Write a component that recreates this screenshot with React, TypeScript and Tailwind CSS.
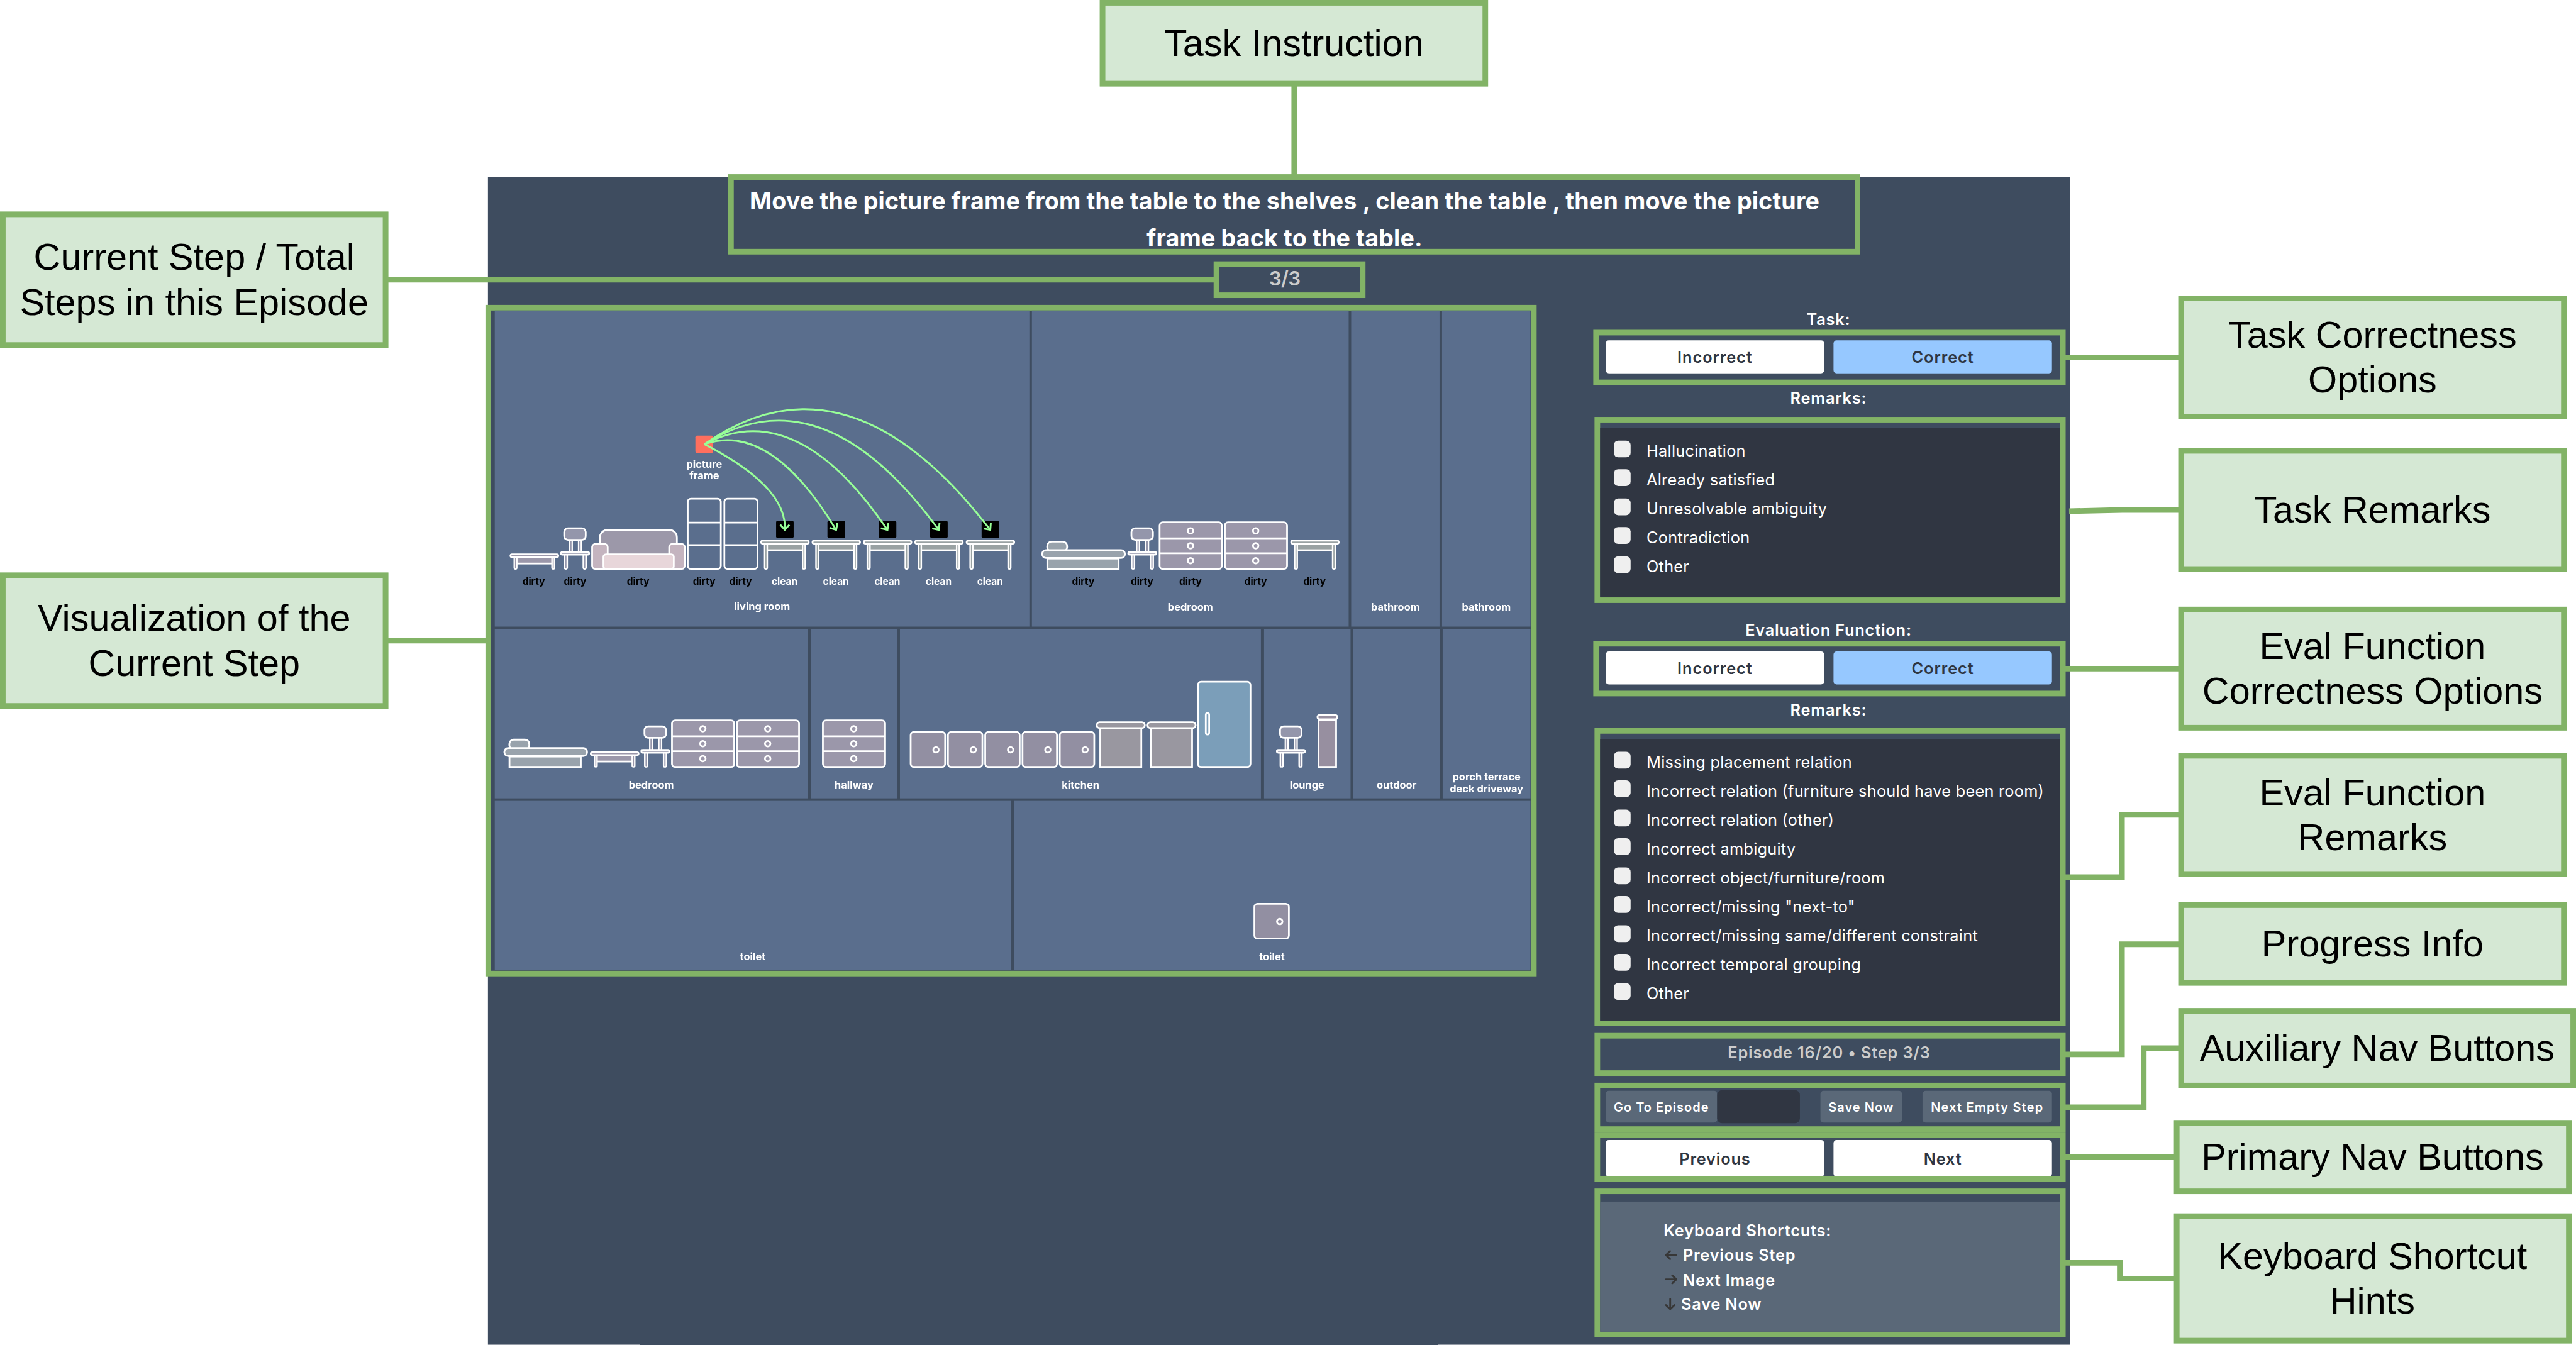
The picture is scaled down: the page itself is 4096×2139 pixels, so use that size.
import React from "react";

type Pt = { x: number; f: number };
const ST = { stroke: "#fff", strokeWidth: 2.8 };

function Chair({ x, f }: Pt) {
  return (
    <g {...ST} fill="#9496ab">
      <rect x={x - 9} y={f - 49} width={4.4} height={22} strokeWidth={2.2} />
      <rect x={x + 5.6} y={f - 49} width={4.4} height={22} strokeWidth={2.2} />
      <rect x={x - 17} y={f - 26} width={4.4} height={24.6} rx={2.2} strokeWidth={2.4} />
      <rect x={x + 13.2} y={f - 26} width={4.4} height={24.6} rx={2.2} strokeWidth={2.4} />
      <rect x={x - 17.5} y={f - 66.6} width={34.6} height={18.6} rx={6} />
      <rect x={x - 22.6} y={f - 28.6} width={45.2} height={4.4} rx={2.2} />
    </g>
  );
}

function CoffeeTable({ x, f }: Pt) {
  return (
    <g {...ST} fill="#9b97aa">
      <rect x={x - 29} y={f - 20} width={58} height={10} />
      <rect x={x - 32.3} y={f - 20} width={4} height={18.6} rx={2} strokeWidth={2.4} />
      <rect x={x + 28.3} y={f - 20} width={4} height={18.6} rx={2} strokeWidth={2.4} />
      <rect x={x - 38.4} y={f - 24.8} width={76.8} height={4.4} rx={2.2} />
    </g>
  );
}

function Table({ x, f }: Pt) {
  return (
    <g {...ST} fill="#99a2a3">
      <rect x={x - 29} y={f - 41} width={58} height={9.6} />
      <rect x={x - 32.6} y={f - 41} width={4.2} height={39.6} rx={2} strokeWidth={2.4} />
      <rect x={x + 28.4} y={f - 41} width={4.2} height={39.6} rx={2} strokeWidth={2.4} />
      <rect x={x - 38.2} y={f - 46.6} width={76.4} height={4.8} rx={2.4} />
    </g>
  );
}

function Sofa({ x, f }: Pt) {
  return (
    <g {...ST}>
      <path
        d={`M${x - 61.8} ${f - 12}V${f - 52}a12 12 0 0 1 12 -12H${x + 49.8}a12 12 0 0 1 12 12V${f - 12}Z`}
        fill="#9c98a9"
      />
      <rect x={x - 74.4} y={f - 41.3} width={25} height={39.9} rx={5} fill="#c4b4bf" />
      <rect x={x + 49.4} y={f - 41.3} width={25} height={39.9} rx={5} fill="#c4b4bf" />
      <rect x={x - 56.2} y={f - 24.8} width={113} height={23.4} rx={4} fill="#e8d6da" />
    </g>
  );
}

function Shelf({ x, f }: Pt) {
  return (
    <g {...ST} fill="none">
      <rect x={x - 26.6} y={f - 114.2} width={53.2} height={112.8} rx={5} />
      <path d={`M${x - 26.6} ${f - 75.7}h53.2M${x - 26.6} ${f - 39.6}h53.2`} />
    </g>
  );
}

function Bed({ x, f }: Pt) {
  return (
    <g {...ST} fill="#99a3ac">
      <rect x={x - 58.2} y={f - 18} width={114.6} height={16.6} />
      <rect x={x - 58.4} y={f - 45.2} width={32} height={16} rx={7} />
      <rect x={x - 66.4} y={f - 31.6} width={132.8} height={12.8} rx={6} />
    </g>
  );
}

function Dresser({ x, f }: Pt) {
  return (
    <g {...ST} fill="#9b97aa">
      <rect x={x - 50} y={f - 76.2} width={100} height={74.8} rx={5} />
      <path d={`M${x - 50} ${f - 50.6}h100M${x - 50} ${f - 26.6}h100`} />
      {[62.6, 38.6, 14.6].map((d) => (
        <circle key={d} cx={x - 0.4} cy={f - d} r={4.4} />
      ))}
    </g>
  );
}

function Cabinet({ x, f }: Pt) {
  return (
    <g {...ST} fill="#928fa2">
      <rect x={x - 27.7} y={f - 57.4} width={55.4} height={56} rx={5} />
      <circle cx={x + 13} cy={f - 28.8} r={4.4} />
    </g>
  );
}

function Counter({ x, f }: Pt) {
  return (
    <g {...ST} fill="#9997a0">
      <rect x={x - 33.2} y={f - 64} width={66} height={62.6} />
      <rect x={x - 38.8} y={f - 73} width={77.2} height={9.2} rx={4.6} />
    </g>
  );
}

function Stand({ x, f }: Pt) {
  return (
    <g {...ST} fill="#978fa0">
      <rect x={x - 14.2} y={f - 77} width={28.2} height={75.6} />
      <rect x={x - 16} y={f - 84.8} width={32} height={7} rx={3.5} />
    </g>
  );
}

function Fridge({ x, f }: Pt) {
  return (
    <g {...ST} fill="#7b9eb9">
      <rect x={x - 42.2} y={f - 138.2} width={84.4} height={136.8} rx={5} />
      <rect x={x - 29.6} y={f - 87.8} width={5.4} height={34.4} rx={2.7} />
    </g>
  );
}

// Origin shared by every movement arrow: the centre of the picture frame.
const FX = 1131.8;
const FY = 713.8;

function Arrow({ x }: { x: number }) {
  const y = 851.5;
  const dx = x - FX;
  const dy = y - FY;
  const cx = dx > dy ? (FX + x) / 2 : (FX + x) / 2 + dy / 2;
  const cy = dx > dy ? (FY + y) / 2 - dx / 2 : (FY + y) / 2;
  const a = dx > dy ? Math.atan2(y - cy, x - cx) : Math.PI / 2;
  const arm = (s: number) =>
    `${x - 11 * Math.cos(a + s * 0.73)} ${y - 11 * Math.sin(a + s * 0.73)}`;
  return (
    <g fill="none" stroke="#98ff98" strokeWidth={2.9}>
      <path d={`M${FX} ${FY}Q${cx} ${cy} ${x} ${y}`} />
      <path d={`M${arm(1)}L${x} ${y}L${arm(-1)}`} />
    </g>
  );
}

// Floor lines of the first and second row of rooms.
const F1 = 915.6;
const F2 = 1233.8;
const TABLES = [1261.2, 1343.7, 1426.2, 1508.7, 1591.4];

function Scene() {
  return (
    <svg
      className="absolute left-0 top-0 h-[1061px] w-[1671px] font-['Inter',sans-serif] text-[16.6px] font-bold"
      viewBox="789 499 1671 1061"
      textAnchor="middle"
    >
      <CoffeeTable x={858.6} f={F1} />
      <Chair x={924} f={F1} />
      <Sofa x={1025.8} f={F1} />
      <Shelf x={1131.6} f={F1} />
      <Shelf x={1190.5} f={F1} />
      {TABLES.map((x) => (
        <g key={x}>
          <Table x={x} f={F1} />
          <rect x={x - 14.2} y={836.7} width={28.2} height={28} rx={2.5} />
        </g>
      ))}
      <rect x={1117.3} y={700} width={28.5} height={28} rx={2.5} fill="#ff6f5e" />
      {TABLES.map((x) => (
        <Arrow key={x} x={x - 0.2} />
      ))}
      <Bed x={1741} f={F1} />
      <Chair x={1835.4} f={F1} />
      <Dresser x={1913.2} f={F1} />
      <Dresser x={2018} f={F1} />
      <Table x={2112.8} f={F1} />

      <Bed x={876.8} f={F2} />
      <CoffeeTable x={987.6} f={F2} />
      <Chair x={1053} f={F2} />
      <Dresser x={1129.7} f={F2} />
      <Dresser x={1233.9} f={F2} />
      <Dresser x={1372.2} f={F2} />
      {[1490.9, 1550.8, 1610.7, 1670.6, 1730.5].map((x) => (
        <Cabinet key={x} x={x} f={F2} />
      ))}
      <Counter x={1801} f={F2} />
      <Counter x={1882.6} f={F2} />
      <Fridge x={1967} f={F2} />
      <Chair x={2074.2} f={F2} />
      <Stand x={2132.8} f={F2} />
      <Cabinet x={2043.2} f={1509.8} />

      <g fill="#000" className="text-[15.6px]">
        {[857.5, 924, 1025.3, 1131.3, 1190, 1740.4, 1835, 1912.7, 2017.7, 2112].map((x) => (
          <text key={x} x={x} y={940}>
            dirty
          </text>
        ))}
      </g>
      <g fill="#fff">
        {TABLES.map((x) => (
          <text key={x} x={x - 0.6} y={940} className="text-[15.6px]">
            clean
          </text>
        ))}
        <text x={1131.6} y={752}>picture</text>
        <text x={1131.6} y={769.6}>frame</text>
      </g>
    </svg>
  );
}

function Room({ box, name }: { box: string; name: React.ReactNode }) {
  return (
    <div
      className={`${box} flex flex-col justify-end bg-[#5a6e8d] text-center font-['Inter',sans-serif] text-[16.6px] font-bold leading-[19px] text-white`}
    >
      <div>{name}</div>
    </div>
  );
}

function Toggle() {
  return (
    <div className="flex h-[89px] w-[759px] shrink-0 gap-[15px] border-[9px] border-[#82b366] pl-[11px] pt-[8px] text-center text-[25.6px] font-semibold leading-[52px] tracking-[0.95px] text-[#2f3642]">
      <button className="h-[53px] w-[351px] rounded-[5px] bg-white">Incorrect</button>
      <button className="h-[53px] w-[351px] rounded-[5px] bg-[#96c8ff]">Correct</button>
    </div>
  );
}

function Remarks({ items, box }: { items: string[]; box: string }) {
  return (
    <div className={`${box} ml-[2px] w-[757px] shrink-0 border-[9px] border-[#82b366] pt-[9px]`}>
      <div className="flex h-full flex-col bg-[#303642] pl-[22px] pt-[19.5px]">
        {items.map((t) => (
          <label
            key={t}
            className="flex h-[46.5px] shrink-0 gap-[25.5px] text-[25.6px] leading-[34.4px] tracking-[0.24px] text-white"
          >
            <span className="h-[27px] w-[27px] shrink-0 rounded-[7px] bg-[#efefef]" />
            <span className="whitespace-nowrap">{t}</span>
          </label>
        ))}
      </div>
    </div>
  );
}

const ARROWS = {
  left: "M20.5 10H3.8M10.4 3.6L3.8 10L10.4 16.4",
  right: "M3.8 10H20.5M13.9 3.6L20.5 10L13.9 16.4",
  down: "M10.6 1.4V17.8M3.8 11.2L10.6 17.8L17.4 11.2",
};

function Hint({ dir, text }: { dir: keyof typeof ARROWS; text: string }) {
  return (
    <div className="flex items-center">
      <svg
        viewBox="0 0 23 20"
        className={dir === "down" ? "mr-[5px] h-[20px] w-[23px]" : "mr-[8px] h-[20px] w-[23px]"}
        fill="none"
        stroke="#373737"
        strokeWidth={2.9}
        strokeLinecap="round"
        strokeLinejoin="round"
      >
        <path d={ARROWS[dir]} />
      </svg>
      <span>{text}</span>
    </div>
  );
}

const CALLOUTS: { pos: string; lines: string[] }[] = [
  { pos: "left-[1767px] top-0 w-[624px] h-[139px]", lines: ["Task Instruction"] },
  { pos: "left-0 top-[340px] w-[624px] h-[219px]", lines: ["Current Step / Total", "Steps in this Episode"] },
  { pos: "left-0 top-[920px] w-[624px] h-[219px]", lines: ["Visualization of the", "Current Step"] },
  { pos: "left-[3500px] top-[475px] w-[624px] h-[199px]", lines: ["Task Correctness", "Options"] },
  { pos: "left-[3500px] top-[720px] w-[624px] h-[199px]", lines: ["Task Remarks"] },
  { pos: "left-[3500px] top-[975px] w-[624px] h-[199px]", lines: ["Eval Function", "Correctness Options"] },
  { pos: "left-[3500px] top-[1210px] w-[624px] h-[199px]", lines: ["Eval Function", "Remarks"] },
  { pos: "left-[3500px] top-[1450px] w-[624px] h-[134px]", lines: ["Progress Info"] },
  { pos: "left-[3500px] top-[1620px] w-[639px] h-[129px]", lines: ["Auxiliary Nav Buttons"] },
  { pos: "left-[3492.5px] top-[1800px] w-[639px] h-[119px]", lines: ["Primary Nav Buttons"] },
  { pos: "left-[3492.5px] top-[1950px] w-[639px] h-[209px]", lines: ["Keyboard Shortcut", "Hints"] },
];

export default function App() {
  return (
    <div className="h-[2139px] w-[4096px] overflow-hidden bg-white">
      <div className="relative flex h-[2161px] w-[4139px] origin-top-left scale-[0.98961] flex-col">
        <div className="ml-[784px] mt-[284px] flex h-[1877px] w-[2542px] shrink-0 flex-col bg-[#3e4c5f] font-['Inter',sans-serif]">
          <div className="-mt-[4px] ml-[386px] h-[129px] w-[1819px] shrink-0 border-[9px] border-[#82b366] pt-[4.5px]">
            <h1 className="w-[1770px] whitespace-nowrap text-center text-[38px] font-bold leading-[59.3px] tracking-[0.16px] text-white">
              Move the picture frame from the table to the shelves , clean the table , then move the picture
              <br />
              frame back to the table.
            </h1>
          </div>
          <div className="ml-[1166px] mt-[11px] h-[59px] w-[244px] shrink-0 border-[9px] border-[#82b366]">
            <div className="w-[210px] text-center text-[31.6px] font-semibold leading-[38px] tracking-[-0.6px] text-[#cccccc]">
              3/3
            </div>
          </div>
          <div className="mt-[11px] flex shrink-0">
            <div className="relative -ml-[4px] flex h-[1079px] w-[1689px] shrink-0 flex-col gap-[4px] border-[9px] border-[#82b366] pl-[6px]">
              <div className="flex h-[508px] gap-[4.5px]">
                <Room box="w-[858.9px] pb-[23px]" name="living room" />
                <Room box="w-[508.6px] pb-[22.5px]" name="bedroom" />
                <Room box="w-[141.4px] pb-[22.5px]" name="bathroom" />
                <Room box="w-[141.6px] pb-[22.5px]" name="bathroom" />
              </div>
              <div className="flex h-[272px] gap-[4.6px]">
                <Room box="w-[503px] pb-[12px]" name="bedroom" />
                <Room box="w-[139.2px] pb-[12px]" name="hallway" />
                <Room box="w-[579.6px] pb-[12px]" name="kitchen" />
                <Room box="w-[139.2px] pb-[12px]" name="lounge" />
                <Room box="w-[139.4px] pb-[12px]" name="outdoor" />
                <Room box="w-[140.4px] pb-[6px]" name={<>porch terrace<br />deck driveway</>} />
              </div>
              <div className="flex h-[272px] gap-[5px]">
                <Room box="w-[829px] pb-[12.5px]" name="toilet" />
                <Room box="w-[829.5px] pb-[12.5px]" name="toilet" />
              </div>
              <Scene />
            </div>
            <div className="ml-[91px] flex w-[759px] shrink-0 flex-col text-[25.6px] tracking-[0.82px]">
              <div className="h-[40px] shrink-0 pr-[3px] text-center font-semibold leading-[45px] text-white">Task:</div>
              <Toggle />
              <div className="h-[51px] shrink-0 pr-[3px] text-center font-semibold leading-[41.4px] text-white">
                Remarks:
              </div>
              <Remarks
                box="h-[299px]"
                items={["Hallucination", "Already satisfied", "Unresolvable ambiguity", "Contradiction", "Other"]}
              />
              <div className="h-[61px] shrink-0 pr-[3px] pt-[21px] text-center font-semibold leading-[45.4px] text-white">
                Evaluation Function:
              </div>
              <Toggle />
              <div className="h-[51px] shrink-0 pr-[3px] text-center font-semibold leading-[43px] text-white">
                Remarks:
              </div>
              <Remarks
                box="h-[479px]"
                items={[
                  "Missing placement relation",
                  "Incorrect relation (furniture should have been room)",
                  "Incorrect relation (other)",
                  "Incorrect ambiguity",
                  "Incorrect object/furniture/room",
                  'Incorrect/missing "next-to"',
                  "Incorrect/missing same/different constraint",
                  "Incorrect temporal grouping",
                  "Other",
                ]}
              />
              <div className="ml-[2px] mt-[11px] h-[69px] border-[9px] border-[#82b366] pr-[3px] text-center font-semibold leading-[45.4px] text-[#cccccc]">
                Episode 16/20 • Step 3/3
              </div>
              <div className="ml-[2px] mt-[11px] flex h-[79px] items-start border-[9px] border-[#82b366] pl-[9px] pt-[3px] text-center text-[20.2px] font-semibold leading-[54px] tracking-[1.05px] text-white">
                <button className="mt-px h-[51px] w-[179px] rounded-[5px] bg-[#5a6878]">Go To Episode</button>
                <span className="h-[53px] w-[133px] rounded-[8px] bg-[#303642]" />
                <button className="ml-[33px] mt-px h-[51px] w-[131px] rounded-[5px] bg-[#5a6878]">Save Now</button>
                <button className="ml-[33px] mt-px h-[51px] w-[208px] rounded-[5px] bg-[#5a6878] tracking-[1.2px]">
                  Next Empty Step
                </button>
              </div>
              <div className="ml-[2px] mt-px flex h-[79px] gap-[15px] overflow-hidden border-[9px] border-[#82b366] pl-[9px] pt-[3px] text-center font-semibold leading-[59.4px] text-[#2f3642]">
                <button className="h-[59px] w-[351px] rounded-[5px] bg-white">Previous</button>
                <button className="h-[59px] w-[351px] rounded-[5px] bg-white">Next</button>
              </div>
              <div className="ml-[2px] mt-[11px] h-[239px] border-[9px] border-[#82b366] pt-[11.5px]">
                <div className="h-full bg-[#5a6878] pl-[102px] pt-[27px] font-semibold leading-[39.6px] text-white">
                  <div>Keyboard Shortcuts:</div>
                  <Hint dir="left" text="Previous Step" />
                  <Hint dir="right" text="Next Image" />
                  <Hint dir="down" text="Save Now" />
                </div>
              </div>
            </div>
          </div>
        </div>

        {CALLOUTS.map((c) => (
          <div
            key={c.pos}
            className={`absolute ${c.pos} flex flex-col items-center justify-center whitespace-nowrap border-[9px] border-[#82b366] bg-[#d5e8d4] font-['Liberation_Sans',Arial,sans-serif] text-[60px] leading-[72px] text-black`}
          >
            {c.lines.map((l) => (
              <div key={l}>{l}</div>
            ))}
          </div>
        ))}
        <svg
          className="absolute left-0 top-0 h-[2161px] w-[4139px]"
          viewBox="0 0 4139 2161"
          fill="none"
          stroke="#82b366"
          strokeWidth={9}
        >
          <path d="M2079.5 136V283M620 449.5H1953M620 1029.5H784M3315 574.5H3504M3324.5 821.5L3410 819.5H3504M3315 1074.5H3504M3315 1409.5H3409.5V1309.5H3504M3315 1694.5H3409.5V1517.5H3504M3315 1779.5H3444.5V1684.5H3504M3315 1859.5H3496M3315 2029.5H3406V2055H3496" />
        </svg>
      </div>
    </div>
  );
}
